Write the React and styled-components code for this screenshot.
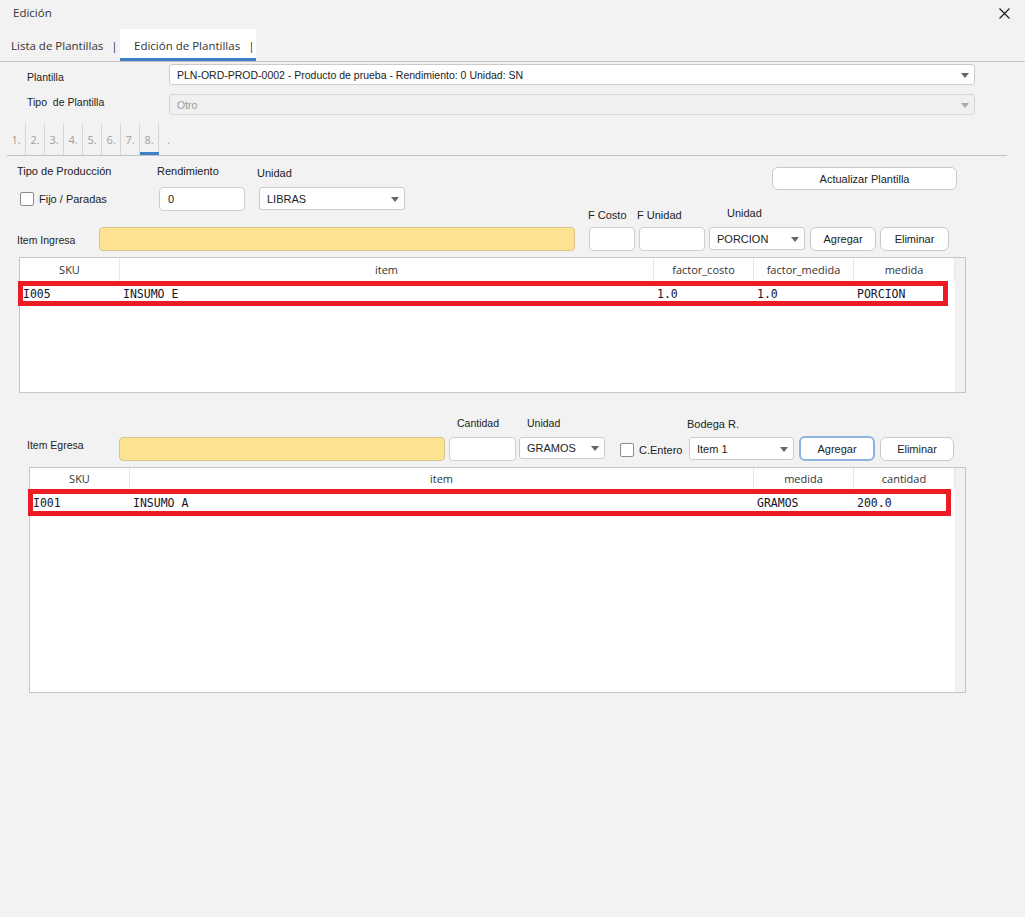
import React from "react";
import styled, { createGlobalStyle } from "styled-components";

const GlobalStyle = createGlobalStyle`
  html, body { margin: 0; padding: 0; background: #f2f2f2; }
  body { font-family: "Liberation Sans", Arial, sans-serif; font-size: 11px; color: #222; }
  * { box-sizing: border-box; }
`;

const Window = styled.div`
  min-height: 917px;
  display: flex;
  flex-direction: column;
  background: #f2f2f2;
`;

const TitleBar = styled.div`
  height: 29px;
  display: flex;
  justify-content: space-between;
  align-items: flex-start;
  padding: 6px 15px 0 13px;
`;

const Title = styled.span`
  font-family: "Open Sans", sans-serif;
  font-size: 11.5px;
  line-height: 14px;
  color: #333;
`;

const CloseBtn = styled.svg`
  margin-top: 2px;
  width: 11px;
  height: 11px;
`;

const TabBar = styled.div`
  height: 33px;
  display: flex;
  border-bottom: 1px solid #c2c2c2;
`;

const Tab = styled.div`
  height: 32px;
  width: ${(p) => p.$w}px;
  padding-left: ${(p) => p.$pl}px;
  display: flex;
  align-items: center;
  font-family: "Open Sans", sans-serif;
  font-size: 11.5px;
  color: #333;
  background: ${(p) => (p.$active ? "#fff" : "transparent")};
  border-bottom: 3px solid ${(p) => (p.$active ? "#3f80c6" : "transparent")};
  padding-top: 3px;
`;

const TabSep = styled.span`
  margin-left: 8px;
`;

const FormSection = styled.div`
  display: flex;
  flex-direction: column;
  gap: 9px;
  padding: 2px 50px 0 27px;
`;

const FormRow = styled.div`
  display: flex;
  align-items: center;
  height: 21px;
`;

const FormLabel = styled.span`
  width: 142px;
  font-family: "Liberation Sans", sans-serif;
  font-size: 10.5px;
  color: #222;
  margin-top: ${(p) => p.$shift || 0}px;
`;

const Select = styled.div`
  position: relative;
  flex: ${(p) => (p.$w ? "none" : 1)};
  width: ${(p) => (p.$w ? `${p.$w}px` : "auto")};
  height: ${(p) => p.$h || 21}px;
  margin-bottom: ${(p) => p.$mb || 0}px;
  margin-left: ${(p) => p.$ml || 0}px;
  background: ${(p) => (p.$disabled ? "#f0f0f0" : "#fff")};
  border: 1px solid ${(p) => (p.$disabled ? "#d6d6d6" : "#cbcbcb")};
  border-radius: 3px;
  display: flex;
  align-items: center;
  padding-left: 7px;
  font-family: "Liberation Sans", sans-serif;
  font-size: ${(p) => p.$fs || 11}px;
  color: ${(p) => (p.$disabled ? "#999" : "#222")};
  white-space: nowrap;
  &::after {
    content: "";
    position: absolute;
    right: 5px;
    top: 50%;
    margin-top: -2px;
    border-left: 4.5px solid transparent;
    border-right: 4.5px solid transparent;
    border-top: 5px solid ${(p) => (p.$disabled ? "#aaa" : "#666")};
  }
`;

const Steps = styled.div`
  margin: 8px 18px 0 7px;
  height: 33px;
  display: flex;
  border-bottom: 1px solid #c2c2c2;
`;

const Step = styled.div`
  position: relative;
  width: 19px;
  height: 32px;
  display: flex;
  align-items: center;
  justify-content: center;
  border-right: ${(p) => (p.$last ? "none" : "1px solid #d6d6d6")};
  font-family: "Open Sans", sans-serif;
  font-size: 11px;
  color: #a0a0a0;
  ${(p) =>
    p.$active &&
    `&::after { content: ""; position: absolute; left: 0; right: -1px; bottom: 0; height: 3px; background: #3f80c6; }`}
`;

const ProdRow = styled.div`
  display: flex;
  align-items: flex-start;
  padding: 8px 68px 0 17px;
`;

const Group = styled.div`
  display: flex;
  flex-direction: column;
  width: ${(p) => (p.$w ? `${p.$w}px` : "auto")};
  margin-left: ${(p) => p.$ml || 0}px;
  gap: ${(p) => p.$gap ?? 5}px;
`;

const Label = styled.span`
  font-family: "Liberation Sans", sans-serif;
  font-size: ${(p) => p.$fs || 11}px;
  line-height: 14px;
  color: #222;
  white-space: nowrap;
  padding-left: ${(p) => p.$indent || 0}px;
  padding-top: ${(p) => p.$pt || 0}px;
  margin-left: ${(p) => p.$ml || 0}px;
  margin-bottom: ${(p) => p.$mb || 0}px;
`;

const CheckRow = styled.label`
  display: flex;
  align-items: center;
  gap: 5px;
  height: 14px;
  width: ${(p) => (p.$w ? `${p.$w}px` : "auto")};
  margin-left: ${(p) => p.$ml || 0}px;
  margin-top: ${(p) => p.$mt || 0}px;
  margin-bottom: ${(p) => p.$mb || 0}px;
  font-family: "Liberation Sans", sans-serif;
  font-size: 11px;
  color: #222;
  white-space: nowrap;
`;

const CheckBox = styled.span`
  width: 14px;
  height: 14px;
  background: #fff;
  border: 1px solid #8a8a8a;
  border-radius: 2px;
`;

const Input = styled.div`
  width: ${(p) => p.$w}px;
  height: ${(p) => p.$h || 24}px;
  margin-left: ${(p) => p.$ml || 0}px;
  background: ${(p) => (p.$yellow ? "#fde291" : "#fff")};
  border: 1px solid ${(p) => (p.$yellow ? "#d9c68f" : "#cdcdcd")};
  border-radius: 4px;
  display: flex;
  align-items: center;
  padding-left: 8px;
  font-family: "Liberation Sans", sans-serif;
  font-size: 11px;
  color: #222;
`;

const Button = styled.button`
  width: ${(p) => p.$w}px;
  height: ${(p) => p.$h || 23}px;
  margin-left: ${(p) => p.$ml || 0}px;
  margin-top: ${(p) => p.$mt || 0}px;
  margin-bottom: ${(p) => p.$mb || 0}px;
  background: #fff;
  border: ${(p) => (p.$focus ? "2px solid #8fb3e0" : "1px solid #c9c9c9")};
  border-radius: 6px;
  font-family: "Liberation Sans", sans-serif;
  font-size: 11px;
  color: #222;
  padding: 0;
  cursor: pointer;
`;

const Spacer = styled.div`
  flex: 1;
`;

const ItemRow = styled.div`
  display: flex;
  align-items: flex-end;
  padding-left: ${(p) => p.$pl}px;
  margin-top: ${(p) => p.$mt || 0}px;
`;

const RowLabel = styled.span`
  width: ${(p) => p.$w}px;
  font-family: "Liberation Sans", sans-serif;
  font-size: ${(p) => p.$fs || 11}px;
  line-height: 14px;
  color: #222;
  margin-bottom: ${(p) => p.$mb || 0}px;
  white-space: nowrap;
`;

const TableBox = styled.div`
  margin-top: ${(p) => p.$mt ?? 6}px;
  margin-left: ${(p) => p.$x}px;
  width: ${(p) => p.$w}px;
  height: ${(p) => p.$h}px;
  border: 1px solid #c6c6c6;
  background: #fff;
  display: flex;
`;

const TableMain = styled.div`
  flex: 1;
  display: flex;
  flex-direction: column;
`;

const ScrollTrack = styled.div`
  width: 10px;
  background: #f1f1f1;
`;

const HeaderRow = styled.div`
  display: grid;
  grid-template-columns: ${(p) => p.$cols};
  height: ${(p) => p.$h}px;
`;

const HeaderCell = styled.div`
  display: flex;
  align-items: center;
  justify-content: center;
  border-right: 1px solid #e6e6e6;
  font-family: "Open Sans", sans-serif;
  font-size: 11px;
  color: #333;
`;

const DataRow = styled.div`
  margin-left: -2px;
  width: ${(p) => p.$w}px;
  height: ${(p) => p.$h}px;
  border: 5px solid #ec1c24;
  display: grid;
  grid-template-columns: ${(p) => p.$cols};
  align-items: center;
`;

const DataCell = styled.span`
  font-family: "DejaVu Sans Mono", "Liberation Mono", monospace;
  font-size: 11.5px;
  color: #14142a;
  white-space: nowrap;
`;

function DataTable({ x, w, h, mt, headCols, heads, headH, rowCols, rowW, rowH, cells }) {
  return (
    <TableBox $x={x} $w={w} $h={h} $mt={mt}>
      <TableMain>
        <HeaderRow $cols={headCols} $h={headH}>
          {heads.map((t) => (
            <HeaderCell key={t}>{t}</HeaderCell>
          ))}
        </HeaderRow>
        <DataRow $cols={rowCols} $w={rowW} $h={rowH}>
          {cells.map((c, i) => (
            <DataCell key={i}>{c}</DataCell>
          ))}
        </DataRow>
      </TableMain>
      <ScrollTrack />
    </TableBox>
  );
}

export default function App() {
  const steps = ["1.", "2.", "3.", "4.", "5.", "6.", "7.", "8.", "."];
  return (
    <Window>
      <GlobalStyle />
      <TitleBar>
        <Title>Edición</Title>
        <CloseBtn viewBox="0 0 11 11">
          <path d="M0.5 0.5 L10.5 10.5 M10.5 0.5 L0.5 10.5" stroke="#222" strokeWidth="1.2" fill="none" />
        </CloseBtn>
      </TitleBar>

      <TabBar>
        <Tab $w={120} $pl={11}>
          Lista de Plantillas<TabSep>|</TabSep>
        </Tab>
        <Tab $w={136} $pl={14} $active>
          Edición de Plantillas<TabSep>|</TabSep>
        </Tab>
      </TabBar>

      <FormSection>
        <FormRow>
          <FormLabel $shift={5}>Plantilla</FormLabel>
          <Select $fs={10.5}>PLN-ORD-PROD-0002 - Producto de prueba - Rendimiento: 0 Unidad: SN</Select>
        </FormRow>
        <FormRow>
          <FormLabel $shift={-5}>Tipo&nbsp; de Plantilla</FormLabel>
          <Select $fs={10.5} $disabled>Otro</Select>
        </FormRow>
      </FormSection>

      <Steps>
        {steps.map((s, i) => (
          <Step key={i} $active={s === "8."} $last={i === steps.length - 1}>
            {s}
          </Step>
        ))}
      </Steps>

      <ProdRow>
        <Group $w={140} $gap={0}>
          <Label>Tipo de Producción</Label>
          <CheckRow $ml={3} $mt={14}>
            <CheckBox />
            Fijo / Paradas
          </CheckRow>
        </Group>
        <Group $w={100} $gap={9}>
          <Label>Rendimiento</Label>
          <Input $w={86} $h={24} $ml={2}>0</Input>
        </Group>
        <Group $gap={7}>
          <Label $pt={2}>Unidad</Label>
          <Select $w={146} $h={23} $ml={2}>LIBRAS</Select>
        </Group>
        <Spacer />
        <Button $w={185} $mt={3}>Actualizar Plantilla</Button>
      </ProdRow>

      <ItemRow $pl={17} $mt={-5}>
        <RowLabel $w={82} $mb={4} $fs={10.5}>Item Ingresa</RowLabel>
        <Input $w={476} $yellow />
        <Group $ml={14}>
          <Label $ml={-1}>F Costo</Label>
          <Input $w={46} />
        </Group>
        <Group $ml={4}>
          <Label $ml={-2}>F Unidad</Label>
          <Input $w={66} />
        </Group>
        <Group $ml={4} $gap={5}>
          <Label $indent={18} $mb={2}>Unidad</Label>
          <Select $w={96} $h={23} $mb={1}>PORCION</Select>
        </Group>
        <Button $w={66} $ml={5} $h={24}>Agregar</Button>
        <Button $w={69} $ml={4} $h={24}>Eliminar</Button>
      </ItemRow>

      <DataTable
        x={19}
        w={947}
        h={136}
        headH={23}
        headCols="100px 534px 100px 100px 1fr"
        heads={["SKU", "item", "factor_costo", "factor_medida", "medida"]}
        rowCols="100px 534px 100px 100px 1fr"
        rowW={930}
        rowH={25}
        cells={["I005", "INSUMO E", "1.0", "1.0", "PORCION"]}
      />

      <ItemRow $pl={27} $mt={23}>
        <RowLabel $w={92} $mb={9} $fs={10.5}>Item Egresa</RowLabel>
        <Input $w={326} $yellow />
        <Group $ml={4} $gap={7}>
          <Label $indent={8} $fs={10.5}>Cantidad</Label>
          <Input $w={67} />
        </Group>
        <Group $ml={3} $gap={7}>
          <Label $indent={8} $fs={10.5}>Unidad</Label>
          <Select $w={86} $h={22} $mb={2}>GRAMOS</Select>
        </Group>
        <CheckRow $ml={15} $mb={4} $w={69}>
          <CheckBox />
          C.Entero
        </CheckRow>
        <Group $gap={5}>
          <Label $ml={-2} $mb={1}>Bodega R.</Label>
          <Select $w={105} $h={23} $mb={1}>Item 1</Select>
        </Group>
        <Button $w={76} $ml={5} $h={25} $focus>Agregar</Button>
        <Button $w={74} $ml={5} $h={24}>Eliminar</Button>
      </ItemRow>

      <DataTable
        x={29}
        w={937}
        h={226}
        mt={6}
        headH={21}
        headCols="100px 624px 100px 1fr"
        heads={["SKU", "item", "medida", "cantidad"]}
        rowCols="100px 624px 100px 1fr"
        rowW={923}
        rowH={27}
        cells={["I001", "INSUMO A", "GRAMOS", "200.0"]}
      />
    </Window>
  );
}
